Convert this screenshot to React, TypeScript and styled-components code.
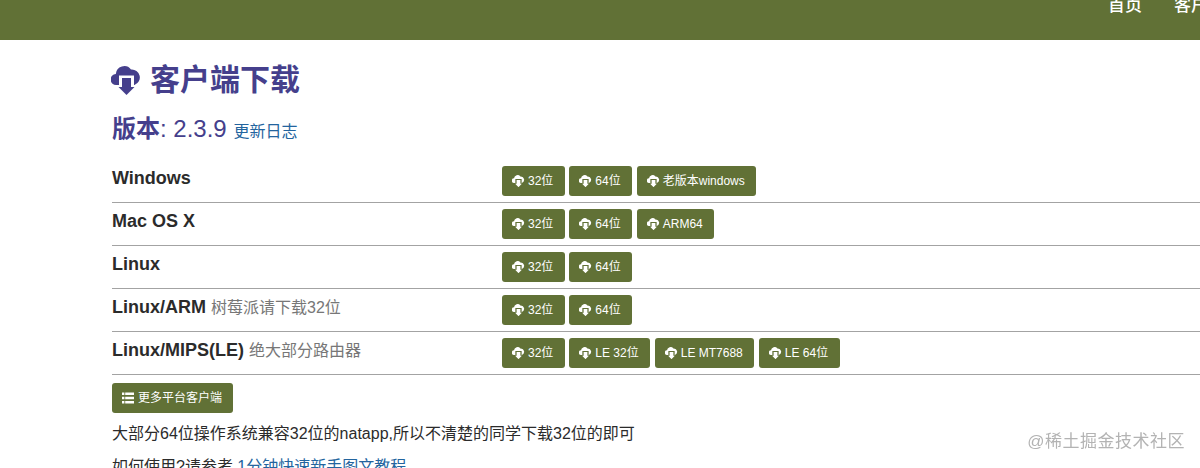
import React from 'react';
import styled, { createGlobalStyle } from 'styled-components';

const olive = '#617136';
const indigo = '#453f8c';
const link = '#23649e';

const GlobalStyle = createGlobalStyle`
  html, body {
    margin: 0;
    padding: 0;
    height: 468px;
    overflow: hidden;
    background: #ffffff;
    font-family: "Liberation Sans", "Noto Sans CJK SC", sans-serif;
    color: #2b2b2b;
  }
`;

const Page = styled.div`
  width: 1200px;
  height: 468px;
  overflow: hidden;
`;

const Header = styled.header`
  height: 40px;
  background: ${olive};
  box-sizing: border-box;
  padding-left: 1108px;
  display: flex;
  gap: 32px;
  overflow: hidden;
  white-space: nowrap;
`;

const NavItem = styled.a`
  flex: none;
  color: #ffffff;
  font-size: 17px;
  font-weight: 500;
  line-height: 16px;
  margin-top: -2px;
`;

const Main = styled.main`
  width: 1000px;
  margin-left: 112px;
`;

const Title = styled.h1`
  display: flex;
  align-items: center;
  gap: 8px;
  margin: 22px 0 0 -1px;
  height: 36px;
  font-size: 30px;
  line-height: 36px;
  font-weight: 600;
  color: ${indigo};
`;

const CloudSvg = styled.svg<{ $size: number }>`
  width: ${(p) => p.$size}px;
  height: ${(p) => (p.$size * 29) / 31}px;
  flex: none;
  fill: currentColor;
`;

const CloudIcon: React.FC<{ size: number }> = ({ size }) => (
  <CloudSvg $size={size} viewBox="0 0 31 29">
    <path d="M8 19H5.5A5.5 5.5 0 0 1 4.8 8 8.5 8.5 0 0 1 20 3.5 8 8 0 0 1 23.5 19H23V9.5H8Z" />
    <path d="M11 12H20V21H23.5L15.5 29 7.5 21H11Z" />
  </CloudSvg>
);

const Version = styled.h2`
  margin: 15px 0 0;
  height: 32px;
  font-size: 24px;
  line-height: 32px;
  font-weight: 400;
  color: ${indigo};
`;

const VersionLabel = styled.span`
  font-weight: 600;
`;

const VersionLink = styled.a`
  font-size: 16px;
  color: ${link};
`;

const Table = styled.div`
  margin-top: 15px;
  width: 1088px;
`;

const Row = styled.div`
  display: flex;
  height: 43px;
  box-sizing: border-box;
  padding-top: 6px;
  border-bottom: 1px solid #a3a3a3;
`;

const Platform = styled.div`
  width: 390px;
  flex: none;
  font-size: 18px;
  line-height: 24px;
  font-weight: 700;
  color: #2b2b2b;
`;

const Note = styled.span`
  font-size: 16px;
  font-weight: 400;
  color: #777777;
  margin-left: 5px;
`;

const Buttons = styled.div`
  display: flex;
  gap: 4.5px;
`;

const Button = styled.a`
  display: inline-flex;
  align-items: center;
  justify-content: center;
  gap: 3px;
  box-sizing: border-box;
  height: 30px;
  padding: 0 11.5px 0 10px;
  background: ${olive};
  color: #ffffff;
  border-radius: 3px;
  font-size: 12px;
  line-height: 18px;
  white-space: nowrap;
`;

const WideButton = styled(Button)`
  margin-top: 8px;
  gap: 4px;
  padding: 0 11px 0 10px;
`;

const ListSvg = styled.svg`
  width: 12px;
  height: 12px;
  flex: none;
  fill: currentColor;
`;

const ListIcon: React.FC = () => (
  <ListSvg viewBox="0 0 12 12">
    <path d="M0 .5H2.4V3H0ZM3.2.5H12V3H3.2ZM0 4.8H2.4V7.3H0ZM3.2 4.8H12V7.3H3.2ZM0 9.1H2.4V11.6H0ZM3.2 9.1H12V11.6H3.2Z" />
  </ListSvg>
);

const Paragraph = styled.p`
  margin: 9px 0 0;
  font-size: 16px;
  line-height: 24px;
  color: #2b2b2b;
`;

const HelpLine = styled(Paragraph)`
  margin-top: 9px;
`;

const TextLink = styled.a`
  color: ${link};
`;

const Watermark = styled.div`
  position: fixed;
  right: 15px;
  top: 431px;
  font-size: 17px;
  line-height: 22px;
  color: #b3b3b3;
  letter-spacing: 0.5px;
`;

const rows = [
  { name: 'Windows', buttons: ['32位', '64位', '老版本windows'] },
  { name: 'Mac OS X', buttons: ['32位', '64位', 'ARM64'] },
  { name: 'Linux', buttons: ['32位', '64位'] },
  { name: 'Linux/ARM', note: '树莓派请下载32位', buttons: ['32位', '64位'] },
  { name: 'Linux/MIPS(LE)', note: '绝大部分路由器', buttons: ['32位', 'LE 32位', 'LE MT7688', 'LE 64位'] },
];

const App: React.FC = () => (
  <Page>
    <GlobalStyle />
    <Header>
      <NavItem>首页</NavItem>
      <NavItem>客户端下载</NavItem>
    </Header>
    <Main>
      <Title>
        <CloudIcon size={31} />
        客户端下载
      </Title>
      <Version>
        <VersionLabel>版本</VersionLabel>: 2.3.9 <VersionLink>更新日志</VersionLink>
      </Version>
      <Table>
        {rows.map((row) => (
          <Row key={row.name}>
            <Platform>
              {row.name}
              {row.note && <Note>{row.note}</Note>}
            </Platform>
            <Buttons>
              {row.buttons.map((label) => (
                <Button key={label}>
                  <CloudIcon size={13} />
                  {label}
                </Button>
              ))}
            </Buttons>
          </Row>
        ))}
      </Table>
      <WideButton>
        <ListIcon />
        更多平台客户端
      </WideButton>
      <Paragraph>大部分64位操作系统兼容32位的natapp,所以不清楚的同学下载32位的即可</Paragraph>
      <HelpLine>
        如何使用?请参考 <TextLink>1分钟快速新手图文教程</TextLink>
      </HelpLine>
    </Main>
    <Watermark>@稀土掘金技术社区</Watermark>
  </Page>
);

export default App;
